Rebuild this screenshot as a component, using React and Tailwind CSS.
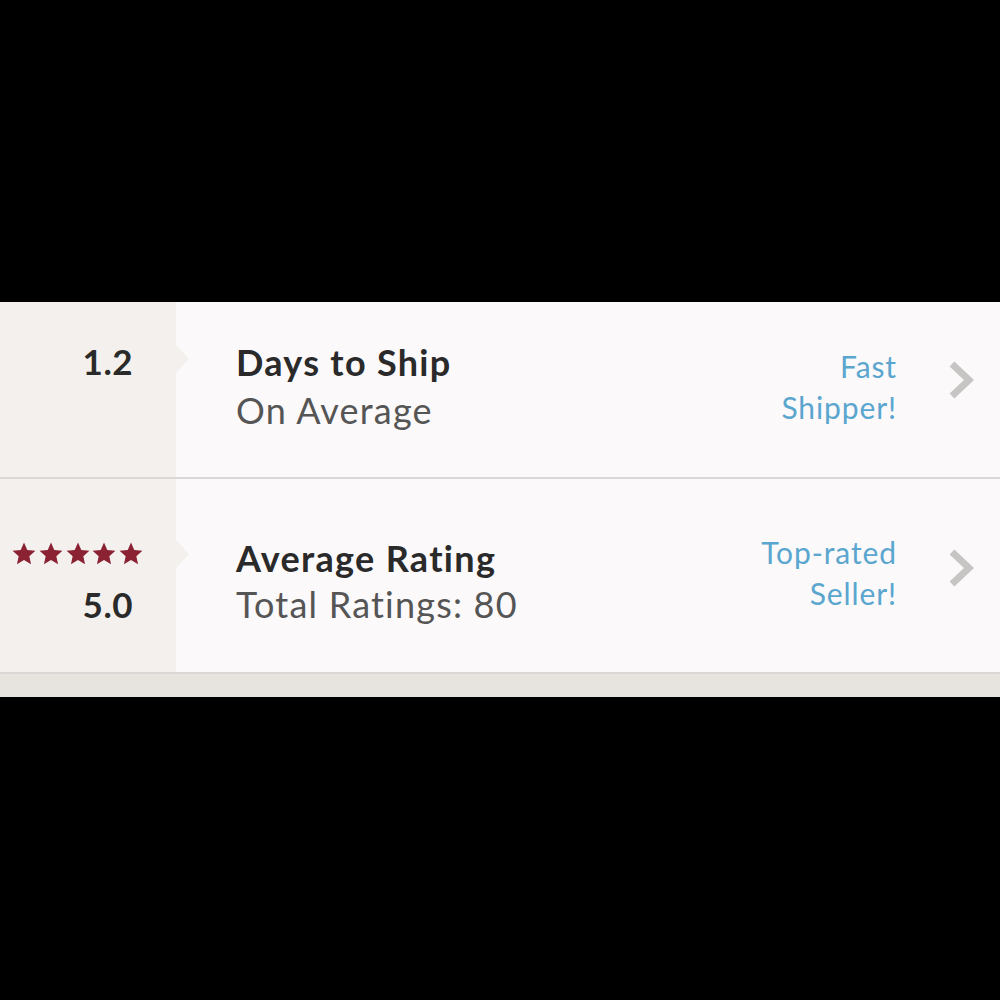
const font = { fontFamily: "Lato, 'Open Sans', sans-serif" };

function Chevron() {
  return (
    <svg width="26" height="38" viewBox="0 0 26 38" className="shrink-0">
      <path d="M4 3 L21 19 L4 35" fill="none" stroke="#c6c5c4" strokeWidth="7" />
    </svg>
  );
}

function Star() {
  return (
    <svg width="24" height="23" viewBox="0 0 24 23">
      <path
        d="M12 0.5 L15.29 7.97 L23.41 8.79 L17.33 14.23 L19.05 22.21 L12 18.1 L4.95 22.21 L6.67 14.23 L0.59 8.79 L8.71 7.97 Z"
        fill="#8a2233"
      />
    </svg>
  );
}

function Notch({ top }) {
  return (
    <div
      className={`absolute right-[-13px] h-0 w-0 border-y-[14px] border-l-[13px] border-y-transparent border-l-[#f4f0ed] ${top}`}
    />
  );
}

function Row({ left, notchTop, title, sub, badge, pad, height, titleGap, chevronPad }) {
  return (
    <div className={`flex ${height} border-b-2 border-[#dad7d6] bg-[#fbf9fa]`}>
      <div className="relative w-[176px] shrink-0 bg-[#f4f0ed]">
        {left}
        <Notch top={notchTop} />
      </div>
      <div className={`flex flex-1 items-start pl-[60px] pr-[26px] ${pad}`}>
        <div className="flex-1">
          <div className="text-[36px] font-bold leading-[48px] tracking-[1.3px] text-[#2a2a2a]">{title}</div>
          <div className={`text-[36px] leading-[48px] tracking-[1.2px] text-[#555555] ${titleGap}`}>{sub}</div>
        </div>
        <div className={`text-right text-[30px] leading-[41px] tracking-[0.9px] text-[#5aa6cf] ${badge.cls}`}>
          {badge.lines.map((l) => (
            <div key={l}>{l}</div>
          ))}
        </div>
        <div className={`ml-[51px] ${chevronPad}`}>
          <Chevron />
        </div>
      </div>
    </div>
  );
}

export default function App() {
  return (
    <div className="flex min-h-screen flex-col bg-black" style={font}>
      <div className="h-[302px]" />

      <Row
        height="h-[177px]"
        pad="pt-[36px]"
        notchTop="top-[43px]"
        left={
          <div className="pr-[43px] pt-[35px] text-right text-[35px] font-bold leading-[48px] tracking-[0.5px] text-[#2a2a2a]">
            1.2
          </div>
        }
        title="Days to Ship"
        sub="On Average"
        titleGap=""
        badge={{ lines: ["Fast", "Shipper!"], cls: "mt-[8px]" }}
        chevronPad="pt-[23px]"
      />

      <Row
        height="h-[195px]"
        pad="pt-[55px]"
        notchTop="top-[61px]"
        left={
          <div className="flex flex-col items-end pr-[33px] pt-[63px]">
            <div className="flex gap-[2.7px]">
              <Star />
              <Star />
              <Star />
              <Star />
              <Star />
            </div>
            <div className="mt-[15px] pr-[10px] text-[35px] font-bold leading-[48px] tracking-[0.5px] text-[#2a2a2a]">
              5.0
            </div>
          </div>
        }
        title="Average Rating"
        sub="Total Ratings: 80"
        titleGap="-mt-[2px]"
        badge={{ lines: ["Top-rated", "Seller!"], cls: "-mt-[2px]" }}
        chevronPad="pt-[15px]"
      />

      <div className="h-[23px] bg-[#e7e4e0]" />
    </div>
  );
}
